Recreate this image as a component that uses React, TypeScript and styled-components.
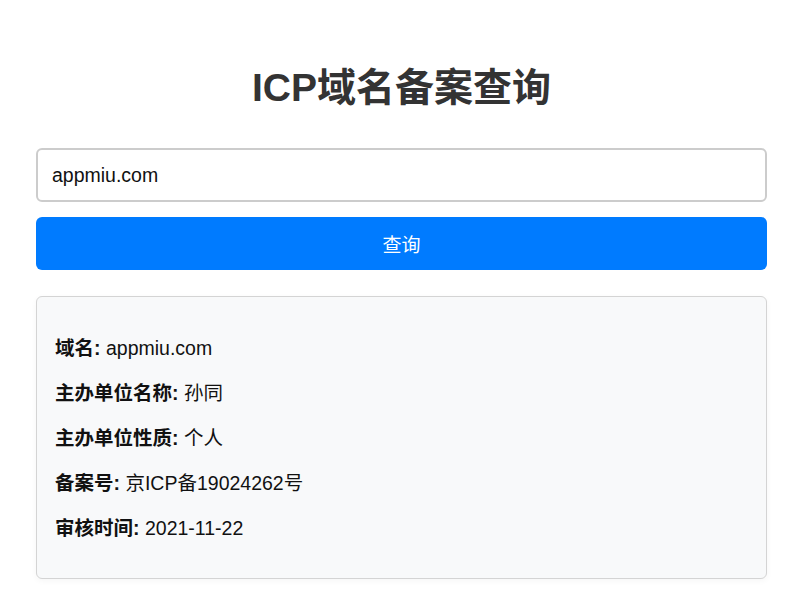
import styled, { createGlobalStyle } from "styled-components";

const GlobalStyle = createGlobalStyle`
  body {
    margin: 0;
    background: #ffffff;
    font-family: "Liberation Sans", Arial, "Noto Sans CJK SC", sans-serif;
  }
`;

const records = [
    { label: "域名", value: "appmiu.com" },
    { label: "主办单位名称", value: "孙同" },
    { label: "主办单位性质", value: "个人" },
    { label: "备案号", value: "京ICP备19024262号" },
    { label: "审核时间", value: "2021-11-22" },
];

export default function App() {
    return (
        <>
            <GlobalStyle/>
            <Page>
                <Title>ICP域名备案查询</Title>
                <SearchInput defaultValue="appmiu.com"/>
                <SearchButton>查询</SearchButton>
                <ResultBox>
                    {records.map((r) => (
                        <Row key={r.label}>
                            <strong>{r.label}:</strong> {r.value}
                        </Row>
                    ))}
                </ResultBox>
            </Page>
        </>
    );
}

const Page = styled.div`
  display: flex;
  flex-direction: column;
  padding: 65px 33px 0 36px;
  min-height: 100vh;
  box-sizing: border-box;
`;

const Title = styled.h1`
  margin: 0 0 37px;
  text-align: center;
  font-size: 39px;
  line-height: 46px;
  font-weight: 700;
  color: #333333;
`;

const SearchInput = styled.input`
  height: 54px;
  box-sizing: border-box;
  padding: 0 14px;
  border: 2px solid #cccccc;
  border-radius: 6px;
  font-family: "Liberation Sans", Arial, "Noto Sans CJK SC", sans-serif;
  font-size: 19.5px;
  color: #111111;
  outline: none;
`;

const SearchButton = styled.button`
  margin-top: 15px;
  height: 53px;
  border: none;
  border-radius: 6px;
  background: #007bff;
  color: #ffffff;
  font-family: "Liberation Sans", Arial, "Noto Sans CJK SC", sans-serif;
  font-size: 19px;
  cursor: pointer;
`;

const ResultBox = styled.div`
  margin-top: 26px;
  padding: 20px 18px 18px;
  background: #f8f9fa;
  border: 1px solid #d4d4d4;
  border-radius: 6px;
  box-shadow: 0 2px 6px rgba(0, 0, 0, 0.04);
`;

const Row = styled.p`
  margin: 18px 0;
  font-size: 19.5px;
  line-height: 27px;
  color: #111111;

  strong {
    font-weight: 700;
  }
`;
